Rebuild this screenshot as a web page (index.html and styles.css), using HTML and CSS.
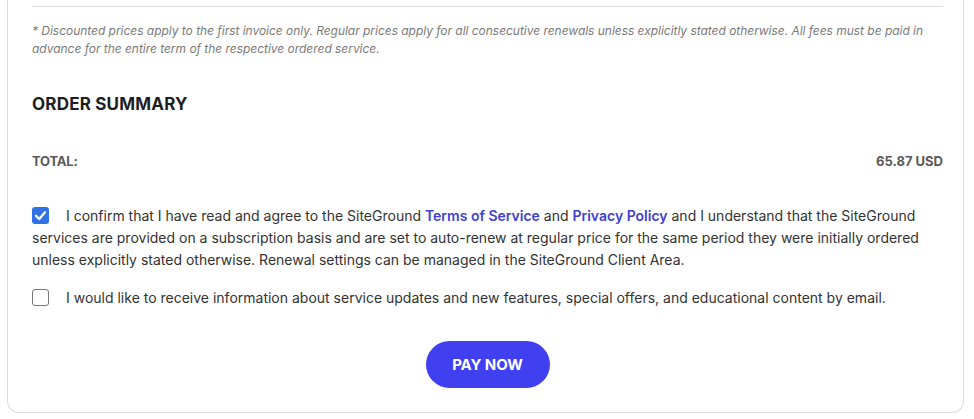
FILE: index.html
```html
<!DOCTYPE html>
<html lang="en">
<head>
<meta charset="utf-8">
<title>Order summary</title>
<link rel="stylesheet" href="styles.css">
</head>
<body>
<div class="card">
  <p class="note">* Discounted prices apply to the first invoice only. Regular prices apply for all consecutive renewals unless explicitly stated otherwise. All fees must be paid in advance for the entire term of the respective ordered service.</p>
  <h2 class="title">ORDER SUMMARY</h2>
  <div class="total">
    <span class="total-label">TOTAL:</span>
    <span class="total-value">65.87 USD</span>
  </div>
  <p class="agree"><span class="box checked"><svg viewBox="0 0 17 17" width="17" height="17"><path d="M4 8.8 L7.2 12 L13 5.2" fill="none" stroke="#fff" stroke-width="2.4" stroke-linecap="round" stroke-linejoin="round"/></svg></span>I confirm that I have read and agree to the SiteGround <a href="#">Terms of Service</a> and <a href="#">Privacy Policy</a> and I understand that the SiteGround services are provided on a subscription basis and are set to auto-renew at regular price for the same period they were initially ordered unless explicitly stated otherwise. Renewal settings can be managed in the SiteGround Client Area.</p>
  <p class="agree second"><span class="box"></span>I would like to receive information about service updates and new features, special offers, and educational content by email.</p>
  <div class="actions">
    <button class="pay" type="button">PAY NOW</button>
  </div>
</div>
</body>
</html>
```
FILE: styles.css
```css
html, body {
  margin: 0;
  padding: 0;
  background: #fff;
}
body {
  font-family: Inter, "Liberation Sans", sans-serif;
  color: #333;
}
.card {
  margin-left: 7px;
  width: 911px;
  padding: 6px 20px 24px 24px;
  border: 1px solid #dcdcdc;
  border-top: none;
  border-radius: 0 0 12px 12px;
}
.note {
  margin: 0;
  padding-top: 15px;
  border-top: 1px solid #dcdcdc;
  font-size: 12px;
  line-height: 18px;
  font-style: italic;
  color: #7a7a7a;
  letter-spacing: -0.03px;
}
.title {
  margin: 34px 0 0 0;
  font-size: 17px;
  line-height: 24px;
  font-weight: 700;
  color: #1e1e1e;
  letter-spacing: 0.2px;
}
.total {
  margin-top: 36px;
  display: flex;
  justify-content: space-between;
  font-size: 13px;
  line-height: 18px;
  font-weight: 700;
  color: #5a5a5a;
}
.total-label {
  letter-spacing: -0.2px;
}
.agree {
  margin: 35px 0 0 0;
  font-size: 14px;
  line-height: 22px;
  color: #333;
}
.agree.second {
  margin-top: 16px;
}
.agree a {
  color: #4040d4;
  font-weight: 600;
  text-decoration: none;
}
.box {
  display: inline-block;
  box-sizing: border-box;
  width: 17px;
  height: 17px;
  margin-right: 17px;
  vertical-align: -3px;
  border: 1px solid #777;
  border-radius: 3px;
  background: #fff;
}
.box.checked {
  border: none;
  background: #2f72e6;
}
.box svg {
  display: block;
}
.actions {
  margin-top: 32px;
  display: flex;
  justify-content: center;
}
.pay {
  width: 124px;
  height: 47px;
  border: none;
  border-radius: 24px;
  background: #4040f0;
  color: #fff;
  font-family: Inter, "Liberation Sans", sans-serif;
  font-size: 15px;
  font-weight: 700;
  letter-spacing: -0.1px;
  cursor: pointer;
}
```
